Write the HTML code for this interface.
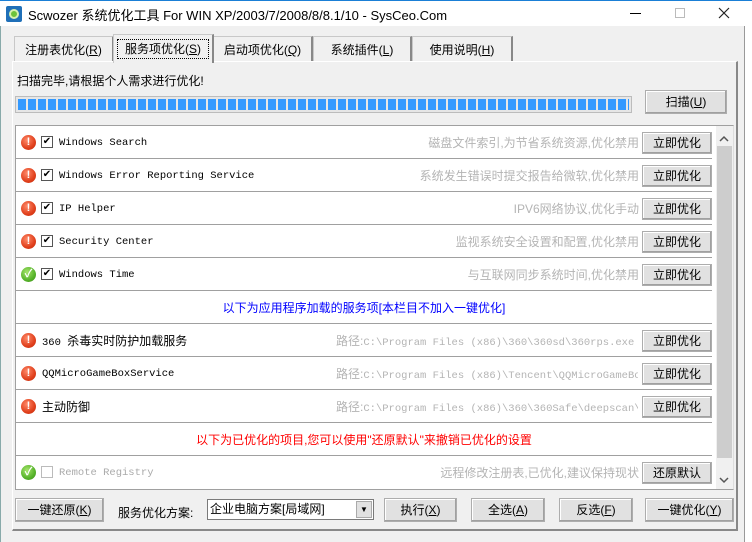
<!DOCTYPE html>
<html><head><meta charset="utf-8"><style>
*{margin:0;padding:0;box-sizing:border-box}
body{width:752px;height:542px;background:#f0f0f0;font-family:"Liberation Sans","Noto Sans CJK SC",sans-serif;font-size:12px;position:relative;overflow:hidden;color:#000}
.a{position:absolute}
.title{left:0;top:0;width:752px;height:26px;background:#fff;border-top:1px solid #1a7fd6}
.btn{position:absolute;background:#e1e1e1;border:1px solid #adadad;box-shadow:inset -1px -1px 0 #a0a0a0,inset 1px 1px 0 #fff;text-align:center;font-size:12px;line-height:20px}
.tab{position:absolute;top:36px;height:26px;background:#f0f0f0;border:1px solid #c8c8c8;border-bottom:none;border-right:2px solid #888;text-align:center;line-height:26px;font-size:12px}
.row{position:absolute;left:16px;width:696px;height:33px;border-bottom:1px solid #a0a0a0}
.mono{font-family:"Liberation Mono","Noto Sans CJK SC",monospace;font-size:10.5px}
.ic{position:absolute;left:5px;top:9px;width:15px;height:15px;border-radius:50%;background:radial-gradient(circle at 40% 35%,#ff8a6a,#e0401c 60%,#c02a0c);color:#fff;font-weight:bold;font-size:11px;line-height:15px;text-align:center}
.ok{background:radial-gradient(circle at 40% 35%,#a6e56c,#56b32a 60%,#3a8a18)}
.cb{position:absolute;left:25px;top:10px;width:12px;height:12px;border:1px solid #555;background:#fff;font-size:10px;line-height:10px;text-align:center}
.nm{position:absolute;left:43px;top:9px;line-height:16px}
.ds{position:absolute;right:73px;top:9px;color:#b4b4b4;line-height:16px}
.rb{right:0;top:6px;width:70px;height:22px}
</style></head><body>
<div class="a title">
 <div class="a" style="left:6px;top:5px;width:16px;height:16px;background:#1f6fb8;border-radius:2px"><div class="a" style="left:3px;top:3px;width:10px;height:10px;border-radius:50%;background:#6cc23a;border:2px solid #d6f0b0"></div></div>
 <div class="a" style="left:28px;top:4px;font-size:13px;">Scwozer 系统优化工具 For WIN XP/2003/7/2008/8/8.1/10 - SysCeo.Com</div>
 <div class="a" style="left:630px;top:12px;width:11px;height:1px;background:#000"></div>
 <div class="a" style="left:675px;top:7px;width:10px;height:10px;border:1px solid #bbb"></div>
 <svg class="a" style="left:718px;top:6px" width="12" height="12"><path d="M1 1L11 11M11 1L1 11" stroke="#222" stroke-width="1.2"/></svg>
</div>
<div class="tab" style="left:14px;width:100px">注册表优化(<u>R</u>)</div>
<div class="tab" style="left:213px;width:100px">启动项优化(<u>Q</u>)</div>
<div class="tab" style="left:313px;width:99px">系统插件(<u>L</u>)</div>
<div class="tab" style="left:412px;width:101px">使用说明(<u>H</u>)</div>
<div class="a" style="left:12px;top:61px;width:726px;height:470px;border:1px solid #fff;border-right:2px solid #888;border-bottom:2px solid #888"></div>
<div class="tab" style="left:113px;top:34px;width:101px;height:29px;border-right:2px solid #888;z-index:2"><div style="margin:4px 3px;border:1px dotted #000;line-height:18px">服务项优化(<u>S</u>)</div></div>
<div class="a" style="left:17px;top:72px;font-size:12px">扫描完毕,请根据个人需求进行优化!</div>
<div class="a" style="left:15px;top:96px;width:617px;height:17px;border:1px solid #bcbcbc;background:#e6e6e6;padding:2px;background-clip:padding-box">
 <div style="width:100%;height:100%;background:repeating-linear-gradient(90deg,#3399ff 0 8px,transparent 8px 10px)"></div></div>
<div class="btn" style="left:645px;top:90px;width:82px;height:24px;line-height:22px">扫描(<u>U</u>)</div>
<div class="a" style="left:15px;top:125px;width:719px;height:365px;background:#fff;border:1px solid #a0a0a0;border-right:1px solid #ddd"></div>
<div class="a" style="left:716px;top:126px;width:17px;height:363px;background:#f0f0f0"></div>
<div class="a" style="left:717px;top:146px;width:15px;height:312px;background:#cdcdcd"></div>
<svg class="a" style="left:719px;top:135px" width="10" height="8"><path d="M1 6L5 2L9 6" stroke="#555" stroke-width="1.5" fill="none"/></svg>
<svg class="a" style="left:719px;top:476px" width="10" height="8"><path d="M1 2L5 6L9 2" stroke="#555" stroke-width="1.5" fill="none"/></svg>

<div class="row" style="top:126px"><div class="ic">!</div><div class="cb">✔</div><div class="nm mono">Windows Search</div><div class="ds">磁盘文件索引,为节省系统资源,优化禁用</div><div class="btn rb">立即优化</div></div>
<div class="row" style="top:159px"><div class="ic">!</div><div class="cb">✔</div><div class="nm mono">Windows Error Reporting Service</div><div class="ds">系统发生错误时提交报告给微软,优化禁用</div><div class="btn rb">立即优化</div></div>
<div class="row" style="top:192px"><div class="ic">!</div><div class="cb">✔</div><div class="nm mono">IP Helper</div><div class="ds">IPV6网络协议,优化手动</div><div class="btn rb">立即优化</div></div>
<div class="row" style="top:225px"><div class="ic">!</div><div class="cb">✔</div><div class="nm mono">Security Center</div><div class="ds">监视系统安全设置和配置,优化禁用</div><div class="btn rb">立即优化</div></div>
<div class="row" style="top:258px"><div class="ic ok">✓</div><div class="cb">✔</div><div class="nm mono">Windows Time</div><div class="ds">与互联网同步系统时间,优化禁用</div><div class="btn rb">立即优化</div></div>
<div class="row" style="top:291px"><div class="a" style="left:0;width:696px;top:8px;text-align:center;color:#0000ff">以下为应用程序加载的服务项[本栏目不加入一键优化]</div></div>
<div class="row" style="top:324px"><div class="ic">!</div><div class="nm" style="left:26px"><span class="mono">360 </span>杀毒实时防护加载服务</div><div class="ds"  style="left:320px;overflow:hidden;white-space:nowrap;width:302px">路径:<span class="mono">C:\Program Files (x86)\360\360sd\360rps.exe</span></div><div class="btn rb">立即优化</div></div>
<div class="row" style="top:357px"><div class="ic">!</div><div class="nm mono" style="left:26px">QQMicroGameBoxService</div><div class="ds"  style="left:320px;overflow:hidden;white-space:nowrap;width:302px">路径:<span class="mono">C:\Program Files (x86)\Tencent\QQMicroGameBox</span></div><div class="btn rb">立即优化</div></div>
<div class="row" style="top:390px"><div class="ic">!</div><div class="nm" style="left:26px">主动防御</div><div class="ds"  style="left:320px;overflow:hidden;white-space:nowrap;width:302px">路径:<span class="mono">C:\Program Files (x86)\360\360Safe\deepscan\r</span></div><div class="btn rb">立即优化</div></div>
<div class="row" style="top:423px"><div class="a" style="left:0;width:696px;top:8px;text-align:center;color:#ff0000">以下为已优化的项目,您可以使用"还原默认"来撤销已优化的设置</div></div>
<div class="row" style="top:456px;border:none"><div class="ic ok">✓</div><div class="cb" style="border-color:#bbb"></div><div class="nm mono" style="color:#aaa">Remote Registry</div><div class="ds">远程修改注册表,已优化,建议保持现状</div><div class="btn rb">还原默认</div></div>

<div class="btn" style="left:15px;top:498px;width:89px;height:24px;line-height:22px">一键还原(<u>K</u>)</div>
<div class="a" style="left:118px;top:504px">服务优化方案:</div>
<div class="a" style="left:207px;top:499px;width:167px;height:21px;background:#fff;border:1px solid #7a7a7a;line-height:19px;padding-left:2px">企业电脑方案[局域网]<div class="a" style="right:1px;top:1px;width:16px;height:17px;background:#e1e1e1;border:1px solid #aaa;font-size:8px;text-align:center;line-height:15px">▼</div></div>
<div class="btn" style="left:384px;top:498px;width:73px;height:24px;line-height:22px">执行(<u>X</u>)</div>
<div class="btn" style="left:471px;top:498px;width:74px;height:24px;line-height:22px">全选(<u>A</u>)</div>
<div class="btn" style="left:559px;top:498px;width:74px;height:24px;line-height:22px">反选(<u>F</u>)</div>
<div class="btn" style="left:645px;top:498px;width:89px;height:24px;line-height:22px">一键优化(<u>Y</u>)</div>
<div class="a" style="left:0;top:26px;width:1px;height:516px;background:#8aa"></div>
<div class="a" style="left:744px;top:26px;width:8px;height:516px;background:#fff;border-left:1px solid #999"></div>
</body></html>
